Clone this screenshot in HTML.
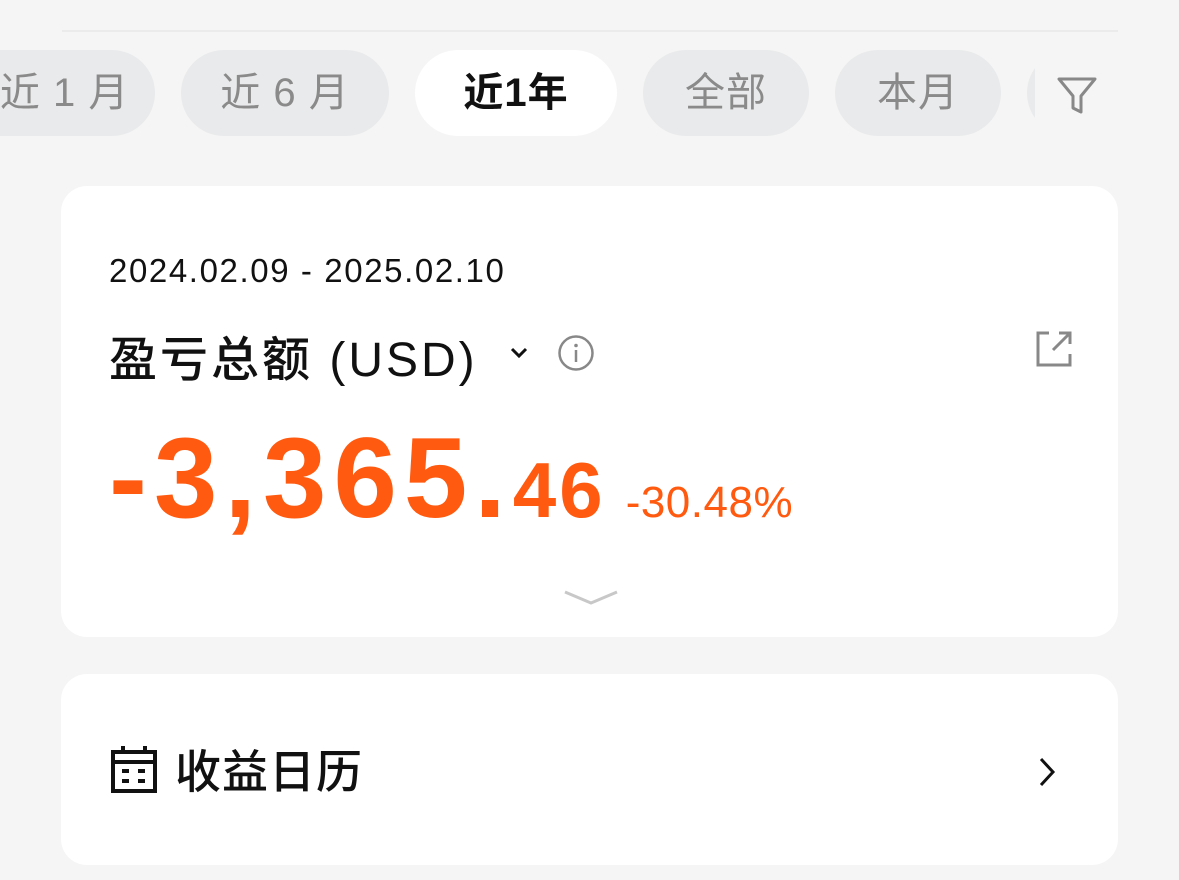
<!DOCTYPE html>
<html><head><meta charset="utf-8"><style>
body{margin:0;width:1179px;height:880px;background:#f5f5f5;font-family:"Liberation Sans","Noto Sans CJK SC",sans-serif;position:relative;overflow:hidden}
.abs{position:absolute}
.line{left:62px;top:30px;width:1056px;height:2px;background:#ebebeb}
.tab{position:absolute;top:50px;height:86px;border-radius:43px;background:#e9eaeb;color:#8a8a8a;font-size:40px;line-height:86px;text-align:center;letter-spacing:1px}
.card{position:absolute;left:61px;width:1057px;background:#fff;border-radius:26px}
.or{color:#ff5a0f}
</style></head><body>
<div class="abs line"></div>
<div class="tab" style="left:-50px;width:205px">&nbsp;&nbsp;近 1 月</div>
<div class="tab" style="left:181px;width:208px">近 6 月</div>
<div class="tab" style="left:415px;width:202px;background:#fff;color:#111;font-weight:bold">近1年</div>
<div class="tab" style="left:643px;width:166px">全部</div>
<div class="tab" style="left:835px;width:166px">本月</div>
<div class="tab" style="left:1027px;width:120px"></div>
<div class="abs" style="left:1035px;top:40px;width:144px;height:110px;background:#f5f5f5"></div>
<svg class="abs" style="left:1055px;top:74px" width="44" height="42" viewBox="0 0 44 42"><path d="M4 5H40L26 22V38L18 34V22Z" fill="none" stroke="#888" stroke-width="3" stroke-linejoin="round"/></svg>

<div class="card" style="top:186px;height:451px">
<div class="abs" style="left:48px;top:66px;font-size:33px;color:#111;letter-spacing:1.6px">2024.02.09 - 2025.02.10</div>
<div class="abs" style="left:48px;top:134px;font-size:48px;color:#111;font-weight:500;letter-spacing:3px">盈亏总额 (USD)</div>
<svg class="abs" style="left:448px;top:160px" width="20" height="14" viewBox="0 0 20 14"><path d="M3 3L10 10L17 3" fill="none" stroke="#111" stroke-width="3"/></svg>
<svg class="abs" style="left:496px;top:148px" width="38" height="38" viewBox="0 0 38 38"><circle cx="19" cy="19" r="16.5" fill="none" stroke="#888" stroke-width="2.5"/><circle cx="19" cy="11.5" r="1.8" fill="#888"/><path d="M19 16V28" stroke="#888" stroke-width="2.5"/></svg>
<svg class="abs" style="left:974px;top:144px" width="38" height="38" viewBox="0 0 38 38"><path d="M14 3H3V35H35V24" fill="none" stroke="#888" stroke-width="3"/><path d="M18 20L34 4M24 3H35V14" fill="none" stroke="#888" stroke-width="3"/></svg>
<div class="abs or" style="left:48px;top:228px;font-size:114px;font-weight:bold;line-height:130px;white-space:nowrap;letter-spacing:7px">-3,365.<span style="font-size:78px;letter-spacing:3px">46</span><span style="font-size:44px;font-weight:normal;margin-left:20px;letter-spacing:0.5px">-30.48%</span></div>
<svg class="abs" style="left:502px;top:402px" width="56" height="20" viewBox="0 0 56 20"><path d="M2 4L28 15L54 4" fill="none" stroke="#c8c8c8" stroke-width="3"/></svg>
</div>

<div class="card" style="top:674px;height:191px">
<svg class="abs" style="left:50px;top:71px" width="46" height="48" viewBox="0 0 46 48"><path d="M2 7H44V46H2ZM2 17H44M12 1V9M34 1V9" fill="none" stroke="#111" stroke-width="4"/><rect x="11" y="24" width="7" height="4" fill="#111"/><rect x="27" y="24" width="7" height="4" fill="#111"/><rect x="11" y="34" width="7" height="4" fill="#111"/><rect x="27" y="34" width="7" height="4" fill="#111"/></svg>
<div class="abs" style="left:114px;top:62px;font-size:46px;color:#111;font-weight:500;letter-spacing:1px">收益日历</div>
<svg class="abs" style="left:976px;top:82px" width="20" height="32" viewBox="0 0 20 32"><path d="M4 3L16 16L4 29" fill="none" stroke="#111" stroke-width="3"/></svg>
</div>
</body></html>
